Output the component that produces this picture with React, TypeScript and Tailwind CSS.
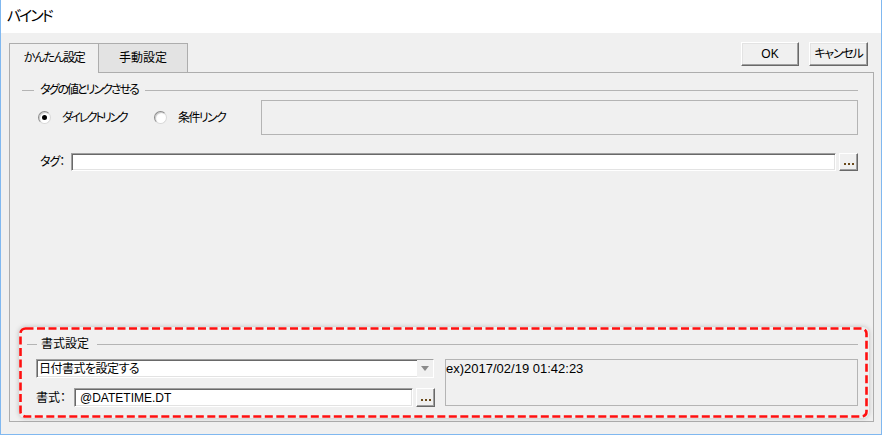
import React from 'react';

const Sunken: React.FC<{ className?: string; children?: React.ReactNode }> = ({ className = '', children }) => (
  <div
    className={`bg-white border border-t-[#a0a0a0] border-l-[#a0a0a0] border-b-white border-r-white shadow-[inset_1px_1px_0_#696969,inset_-1px_-1px_0_#e3e3e3] ${className}`}
  >
    {children}
  </div>
);

const DotsButton: React.FC = () => (
  <div className="ml-[3px] w-[19px] h-full flex items-end justify-center gap-[2px] pb-[5px] pl-[1px] bg-[#f0f0f0] border border-t-white border-l-white border-b-[#696969] border-r-[#696969] shadow-[inset_-1px_-1px_0_#a0a0a0]">
    <span className="w-[2px] h-[2px] bg-[#6a4a1a]" />
    <span className="w-[2px] h-[2px] bg-[#6a4a1a]" />
    <span className="w-[2px] h-[2px] bg-[#6a4a1a]" />
  </div>
);

const Radio: React.FC<{ checked?: boolean; label: string; className?: string; track: string }> = ({ checked, label, className = '', track }) => (
  <div className={`flex items-center ${className}`}>
    <span className="w-[13px] h-[13px] rounded-full bg-white border border-t-[#8a8a8a] border-l-[#8a8a8a] border-b-[#d8d8d8] border-r-[#d8d8d8] shadow-[inset_1px_1px_1px_#c8c8c8] flex items-center justify-center">
      {checked && <span className="w-[5px] h-[5px] rounded-full bg-black" />}
    </span>
    <span className={`ml-[11px] ${track}`}>{label}</span>
  </div>
);

const GroupTitle: React.FC<{ title: string; lead: string; gapA: string; gapB: string }> = ({ title, lead, gapA, gapB }) => (
  <div className="flex items-center h-[14px]">
    <div className={`${lead} h-px bg-[#b4b4b4]`} />
    <span className={`${gapA} leading-none`}>{title}</span>
    <div className={`${gapB} flex-1 h-px bg-[#b4b4b4]`} />
  </div>
);

const Button: React.FC<{ label: string; w: string; track?: string }> = ({ label, w, track = '' }) => (
  <div
    className={`${w} ${track} h-[24px] flex items-center justify-center bg-[#f0f0f0] border border-t-white border-l-white border-b-[#696969] border-r-[#696969] shadow-[inset_-1px_-1px_0_#a0a0a0,inset_1px_1px_0_#e3e3e3]`}
  >
    {label}
  </div>
);

export default function App() {
  return (
    <div className="w-[882px] h-[435px] flex flex-col border-l border-r border-b border-[#80b8f0] bg-[#f0f0f0] text-[12px] text-black font-['Liberation_Sans','Noto_Sans_CJK_JP',sans-serif] [font-feature-settings:'palt']">
      {/* title bar */}
      <div className="h-[33px] shrink-0 bg-white flex items-center pl-[6px] text-[15px] pb-[1px] tracking-[-2px]">バインド</div>

      {/* body */}
      <div className="flex-1 flex flex-col pt-[10px] pl-[8px] pr-[7px] pb-[12px]">
        {/* tabs + buttons */}
        <div className="h-[29px] flex justify-between">
          <div className="flex items-start">
            <div className="relative z-10 w-[90px] h-[30px] bg-[#f0f0f0] border-l border-t border-r border-[#adadad] flex items-center justify-center pb-[1px] tracking-[-1.5px]">
              かんたん設定
            </div>
            <div className="w-[89px] h-[29px] bg-[#e3e3e3] border-t border-r border-[#adadad] flex items-center justify-center">
              手動設定
            </div>
          </div>
          <div className="flex gap-[10px] -mt-[1px] mr-[6px]">
            <Button label="OK" w="w-[58px]" />
            <Button label="キャンセル" w="w-[59px]" track="tracking-[-1.2px]" />
          </div>
        </div>

        {/* tab panel */}
        <div className="flex-1 flex flex-col border border-[#adadad]">
          <div className="mt-[10px] ml-[12px] mr-[15px] tracking-[-2px]">
            <GroupTitle title="タグの値とリンクさせる" lead="w-[12px]" gapA="ml-[6px]" gapB="ml-[7px]" />
          </div>

          <div className="mt-[3px] flex h-[35px] mr-[15px]">
            <div className="ml-[28px] flex items-center">
              <Radio checked label="ダイレクトリンク" className="w-[116px]" track="tracking-[-2.4px]" />
              <Radio label="条件リンク" track="tracking-[-1.6px]" />
            </div>
            <div className="ml-auto w-[597px] h-full border border-[#b4b4b4]" />
          </div>

          <div className="mt-[18px] ml-[30px] mr-[15px] h-[18px] flex items-center">
            <span className="w-[31px] tracking-[-1px]">タグ：</span>
            <Sunken className="flex-1 h-full" />
            <DotsButton />
          </div>

          {/* 書式設定 */}
          <div className="relative mt-auto mb-[3px] ml-[9px] mr-[4px] h-[91px] flex flex-col pt-[10px] pr-[11px] rounded-[6px] shadow-[0_0_5px_rgba(0,0,0,0.22)]">
            <svg className="absolute inset-0 pointer-events-none" width="849" height="91">
              <rect x="1.5" y="1.5" width="846" height="88" rx="5" fill="none" stroke="#ff1010" strokeWidth="2.6" strokeDasharray="8 3.5" />
            </svg>
            <div className="pl-[8px]">
              <GroupTitle title="書式設定" lead="w-[10px]" gapA="ml-[4px]" gapB="ml-[8px]" />
            </div>
            <div className="mt-[8px] pl-[17px] flex">
              <div className="w-[399px] flex flex-col">
                <Sunken className="w-[398px] h-[19px] flex items-center">
                  <span className="pl-[2px] flex-1 tracking-[-0.5px]">日付書式を設定する</span>
                  <span className="w-[16px] h-full bg-[#f0f0f0] flex items-center justify-center">
                    <svg width="8" height="5" viewBox="0 0 8 5">
                      <polygon points="0,0 8,0 4,5" fill="#8a8a8a" />
                    </svg>
                  </span>
                </Sunken>
                <div className="mt-[10px] h-[19px] flex items-center">
                  <span className="w-[38px]">書式：</span>
                  <Sunken className="w-[339px] h-full flex items-center pl-[5px] text-[12px]">@DATETIME.DT</Sunken>
                  <DotsButton />
                </div>
              </div>
              <div className="ml-[10px] flex-1 h-[47px] border border-[#b4b4b4] text-[13px] leading-[16px] pt-[1px]">
                ex)2017/02/19 01:42:23
              </div>
            </div>
          </div>
        </div>
      </div>
    </div>
  );
}
